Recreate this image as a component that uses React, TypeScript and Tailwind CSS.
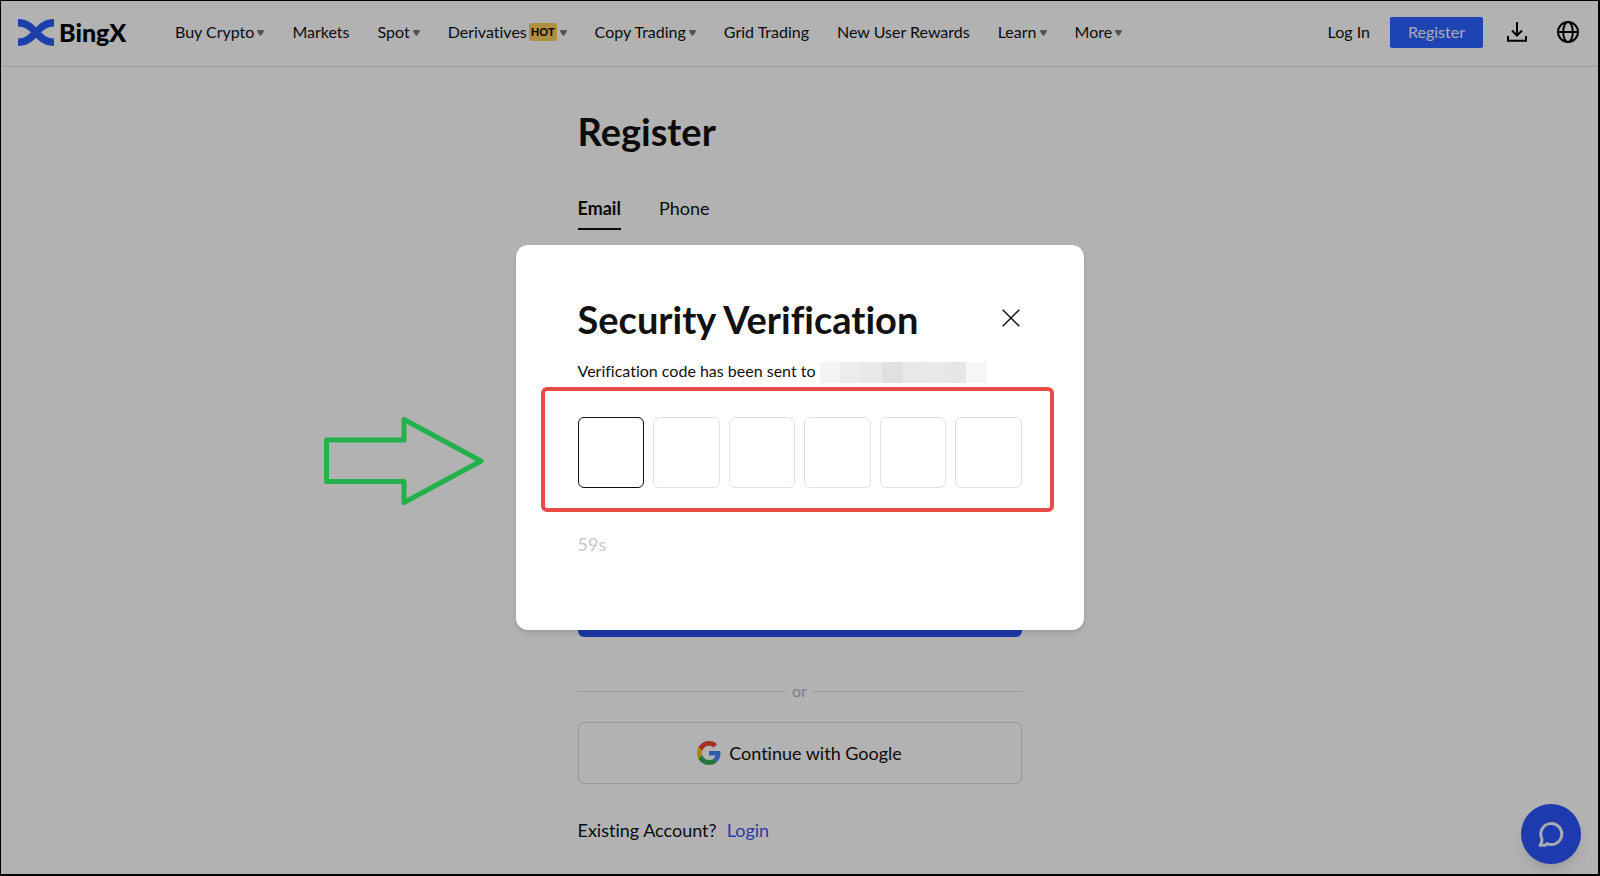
type NavItem = { label: string; menu?: boolean; hot?: boolean };

const navItems: NavItem[] = [
  { label: 'Buy Crypto', menu: true },
  { label: 'Markets' },
  { label: 'Spot', menu: true },
  { label: 'Derivatives', menu: true, hot: true },
  { label: 'Copy Trading', menu: true },
  { label: 'Grid Trading' },
  { label: 'New User Rewards' },
  { label: 'Learn', menu: true },
  { label: 'More', menu: true },
];

function Caret() {
  return (
    <svg viewBox="0 0 7 6" className="mt-0.5 ml-[3px] h-1.5 w-[7px] shrink-0 fill-[#777777]" aria-hidden="true">
      <path d="M1.2 0h4.6c.9 0 1.4 1 .9 1.700L4.400 5.300c-.5.700-1.300.700-1.800 0L.3 1.700C-.2 1 .3 0 1.200 0Z" />
    </svg>
  );
}

function Logo() {
  return (
    <a href="#home" className="flex w-[157px] shrink-0 items-center gap-[5px] text-black">
      <svg viewBox="0 0 36 27" className="h-[27px] w-9" fill="none" stroke="#2a5bf5" strokeWidth="7.500" aria-hidden="true">
        <path d="M0 3.750C9 3.750 13 8.500 18 13.500S27 23.250 36 23.250" />
        <path d="M0 23.250C9 23.250 13 18.500 18 13.500S27 3.750 36 3.750" />
      </svg>
      <span className="text-[25px] leading-8 font-black">BingX</span>
    </a>
  );
}

function Header() {
  return (
    <header className="flex h-[66px] items-center justify-between border-b border-[#e2e2e2] pr-[19px] pb-[3px] pl-[17px] text-base text-[#111111]">
      <div className="flex items-center">
        <Logo />
        <nav className="flex items-center gap-7">
          {navItems.map((item) => (
            <a key={item.label} href="#nav" className="flex items-center whitespace-nowrap">
              {item.label}
              {item.hot && (
                <span className="ml-0.5 rounded-xs bg-[#ffcf5c] px-0.5 text-[11px] leading-[18px] font-black">HOT</span>
              )}
              {item.menu && <Caret />}
            </a>
          ))}
        </nav>
      </div>
      <div className="flex items-center">
        <a href="#login">Log In</a>
        <button type="button" className="ml-5 h-[31px] rounded-xs bg-[#2a62ff] px-[18px] text-[#f2f5ff]">
          Register
        </button>
        <button type="button" aria-label="Download" className="ml-6">
          <svg viewBox="0 0 20 20" className="size-5" fill="none" stroke="#000000" strokeWidth="2" aria-hidden="true">
            <path d="M10 0v13M5 8.500l5 5 5-5M1 14v4.800h18V14" />
          </svg>
        </button>
        <button type="button" aria-label="Language" className="ml-[30px]">
          <svg viewBox="0 0 22 22" className="size-[22px]" fill="none" stroke="#000000" strokeWidth="2" aria-hidden="true">
            <circle cx="11" cy="11" r="10" />
            <ellipse cx="11" cy="11" rx="4.800" ry="10" />
            <path d="M1 11h20" />
          </svg>
        </button>
      </div>
    </header>
  );
}

function GoogleMark() {
  return (
    <svg viewBox="0 0 48 48" className="size-6" aria-hidden="true">
      <path fill="#EA4335" d="M24 9.500c3.540 0 6.710 1.220 9.210 3.600l6.850-6.850C35.900 2.380 30.470 0 24 0 14.620 0 6.510 5.380 2.560 13.220l7.980 6.190C12.430 13.720 17.740 9.500 24 9.500z" />
      <path fill="#4285F4" d="M46.980 24.550c0-1.570-.15-3.090-.38-4.550H24v9.020h12.940c-.58 2.960-2.260 5.480-4.780 7.180l7.730 6c4.510-4.180 7.090-10.360 7.090-17.650z" />
      <path fill="#FBBC05" d="M10.530 28.590c-.48-1.450-.76-2.990-.76-4.590s.27-3.140.76-4.590l-7.980-6.190C.92 16.460 0 20.120 0 24c0 3.880.92 7.540 2.560 10.780l7.970-6.190z" />
      <path fill="#34A853" d="M24 48c6.480 0 11.930-2.130 15.890-5.810l-7.730-6c-2.150 1.450-4.920 2.300-8.160 2.300-6.260 0-11.570-4.220-13.470-9.910l-7.980 6.190C6.510 42.620 14.620 48 24 48z" />
    </svg>
  );
}

function RegisterPage() {
  return (
    <main className="mx-auto w-full max-w-[444px] pb-8 text-lg leading-6 text-[#111111]">
      <h1 className="mt-10 text-[38px] leading-12 font-bold">Register</h1>
      <div role="tablist" className="mt-[41px] flex gap-[38px]">
        <button type="button" role="tab" aria-selected="true" className="border-b-2 border-[#111111] pb-2 font-bold">
          Email
        </button>
        <button type="button" role="tab" aria-selected="false" className="border-b-2 border-transparent pb-2">
          Phone
        </button>
      </div>
      <button type="button" aria-label="Create account" className="mt-[355px] block h-[52px] w-full rounded-md bg-[#2a50f0]" />
      <div className="mt-[42px] flex items-center gap-1.5 text-base leading-6 text-[#b4b4b4]">
        <span className="h-px flex-1 bg-[#dedede]" />
        <span>or</span>
        <span className="h-px flex-1 bg-[#dedede]" />
      </div>
      <button type="button" className="mt-[19px] flex h-[62px] w-full items-center justify-center gap-2 rounded-md border border-[#d8d8d8]">
        <GoogleMark />
        Continue with Google
      </button>
      <p className="mt-[34px] flex gap-2.5">
        Existing Account?
        <a href="#login" className="text-[#3d55f0]">Login</a>
      </p>
    </main>
  );
}

const blocks = ['bg-[#f4f4f4]', 'bg-[#ececec]', 'bg-[#e9e9e9]', 'bg-[#e0e0e0]', 'bg-[#e8e8e8]', 'bg-[#e9e9e9]', 'bg-[#e6e6e6]', 'bg-[#f6f6f6]'];

function VerificationDialog() {
  return (
    <section
      role="dialog"
      aria-modal="true"
      aria-labelledby="dialog-title"
      className="w-full max-w-[568px] rounded-xl bg-white px-[62px] pt-[50px] pb-[74px] text-[#111111] shadow-md"
    >
      <div className="flex items-center justify-between">
        <h2 id="dialog-title" className="text-[38px] leading-12 font-bold">Security Verification</h2>
        <button type="button" aria-label="Close" className="p-0.5 pb-1">
          <svg viewBox="0 0 18 18" className="size-[18px]" fill="none" stroke="#111111" strokeWidth="1.500" aria-hidden="true">
            <path d="M.7.7l16.600 16.600M17.300.7.7 17.300" />
          </svg>
        </button>
      </div>
      <p className="mt-4 flex items-end text-base leading-6">
        Verification code has been sent to
        <span className="ml-1 flex h-[21px] w-[167px]">
          {blocks.map((tone, i) => (
            <span key={i} className={`flex-1 ${tone}`} />
          ))}
        </span>
      </p>
      <div className="mt-1 -mr-8 -ml-[37px] flex gap-[9px] rounded-md border-4 border-[#e84a46] pt-[26px] pr-7 pb-5 pl-[33px]">
        {[1, 2, 3, 4, 5, 6].map((n) => (
          <input
            key={n}
            aria-label={`Digit ${n}`}
            inputMode="numeric"
            maxLength={1}
            className="h-[71px] min-w-0 flex-1 rounded-md border border-[#e2e2e2] text-center text-2xl outline-none first:border-[#111111]"
          />
        ))}
      </div>
      <p className="mt-5 text-lg leading-6 text-[#c8c8c8]">59s</p>
    </section>
  );
}

export default function App() {
  return (
    <div className="relative min-h-screen border border-r-2 border-b-2 border-black bg-white font-['Lato',sans-serif] [font-variant-ligatures:none]">
      <Header />
      <RegisterPage />
      <button
        type="button"
        aria-label="Chat"
        className="absolute right-[17px] bottom-2.5 flex size-[60px] items-center justify-center rounded-full bg-[#2a54fa] shadow-lg"
      >
        <svg viewBox="0 0 26 26" className="size-[26px]" fill="none" stroke="#f0f5ff" strokeWidth="3" strokeLinejoin="round" aria-hidden="true">
          <path d="M9 22.600A10.500 10.500 0 1 0 3.800 17.500C4.500 19.800 3.500 22 2 24.300H7.500Z" />
        </svg>
      </button>
      <div className="absolute inset-0 flex items-center justify-center bg-black/30">
        <VerificationDialog />
      </div>
      <svg viewBox="0 0 162 90" className="absolute top-[414px] left-[321px] h-[90px] w-[162px]" fill="none" stroke="#22b14c" strokeWidth="5" strokeLinejoin="round" aria-hidden="true">
        <path d="M4.500 25H82V4.500L159 46 82 87.500V66.500H4.500Z" />
      </svg>
    </div>
  );
}
